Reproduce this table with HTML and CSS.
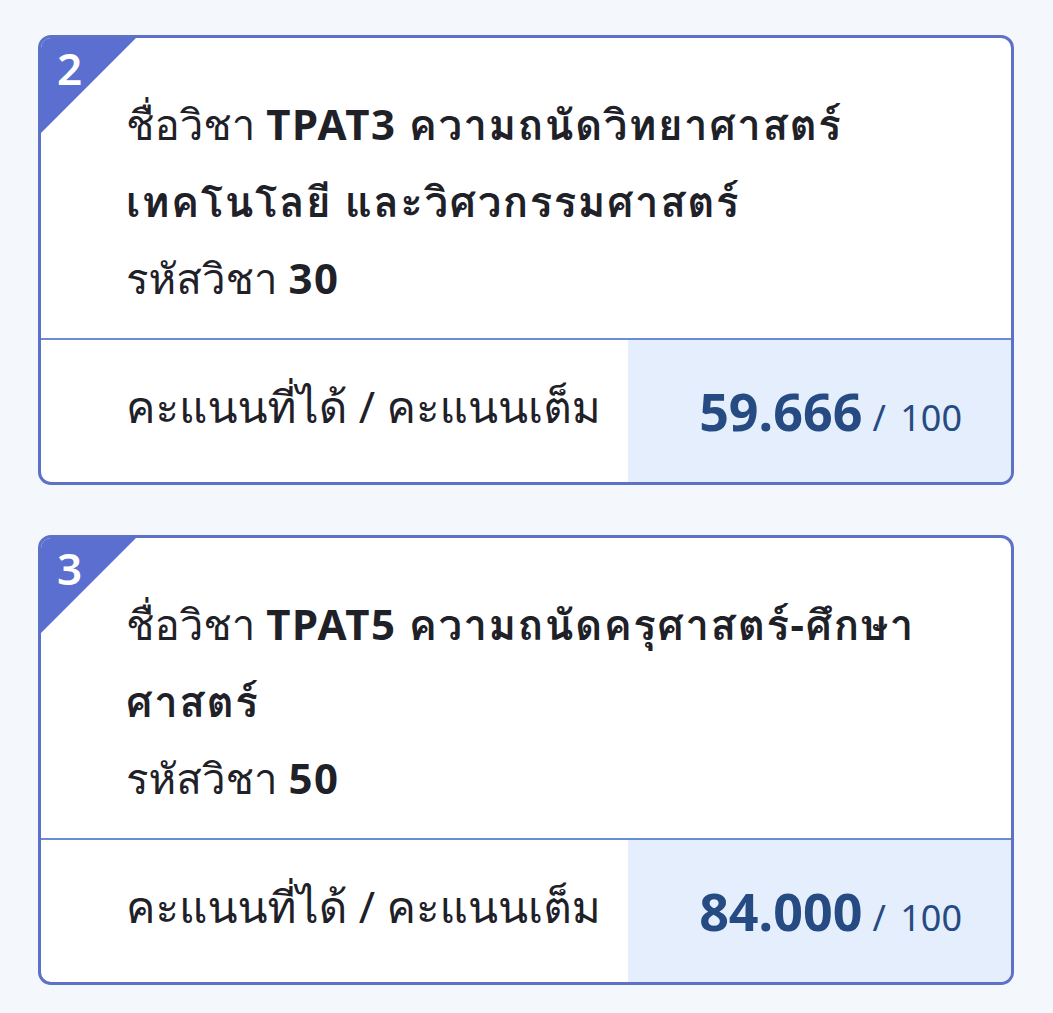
FILE: index.html
```html
<!DOCTYPE html>
<html>
  <head>
    <meta charset="utf-8">
    <title>ผลคะแนน</title>
    <link rel="stylesheet" href="styles.css">
  </head>
  <body>
    <div class="score-list">
      <div class="score-card">
        <span class="corner"></span>
        <span class="order">2</span>
        <div class="subject">
          <p>ชื่อวิชา <b>TPAT3 ความถนัดวิทยาศาสตร์<br>เทคโนโลยี และวิศวกรรมศาสตร์</b></p>
          <p>รหัสวิชา <b>30</b></p>
        </div>
        <div class="score-row">
          <div class="score-label">คะแนนที่ได้ / คะแนนเต็ม</div>
          <div class="score-value">
            <span class="got">59.666</span> <span class="full">/ 100</span>
          </div>
        </div>
      </div>

      <div class="score-card">
        <span class="corner"></span>
        <span class="order">3</span>
        <div class="subject">
          <p>ชื่อวิชา <b>TPAT5 ความถนัดครุศาสตร์-ศึกษา<br>ศาสตร์</b></p>
          <p>รหัสวิชา <b>50</b></p>
        </div>
        <div class="score-row">
          <div class="score-label">คะแนนที่ได้ / คะแนนเต็ม</div>
          <div class="score-value">
            <span class="got">84.000</span> <span class="full">/ 100</span>
          </div>
        </div>
      </div>
    </div>
  </body>
</html>
```

FILE: styles.css
```css
body {
  margin: 0;
  padding: 0;
  background-color: #f4f8fc;
  color: #1f2128;
  font-family: "Noto Sans", "Loma", "Noto Sans Thai", sans-serif;
}

.score-list {
  display: flex;
  flex-direction: column;
  gap: 50px;
  padding: 35px 39px 30px 38px;
}

.score-card {
  position: relative;
  background-color: #fff;
  border: 3px solid #5d71c6;
  border-radius: 13px;
  overflow: hidden;
}

/* number badge in the top-left corner */
.corner {
  position: absolute;
  top: 0;
  left: 0;
  width: 0;
  height: 0;
  border-top: 95px solid #5b6fd1;
  border-right: 95px solid transparent;
}

.order {
  position: absolute;
  top: 2px;
  left: 16px;
  color: #fff;
  font-size: 44px;
  font-weight: 600;
  line-height: 56px;
}

.subject {
  padding: 47px 30px 22px 85px;
}

.subject p {
  margin: 0;
  font-size: 42px;
  line-height: 77px;
}

.subject b {
  font-weight: 700;
  letter-spacing: 1.5px;
}

.score-row {
  display: flex;
  border-top: 2px solid #6b8bd6;
  height: 142px;
}

.score-label {
  flex: 1;
  display: flex;
  align-items: center;
  padding-left: 85px;
  padding-bottom: 8px;
  font-size: 44px;
}

.score-value {
  width: 334px;
  padding-right: 49px;
  background-color: #e4eefc;
  color: #264a82;
  display: flex;
  align-items: baseline;
  justify-content: flex-end;
  gap: 10px;
  padding-top: 35px;
}

.got {
  font-size: 52px;
  font-weight: 700;
}

.full {
  font-size: 36px;
  word-spacing: 5px;
}
```
